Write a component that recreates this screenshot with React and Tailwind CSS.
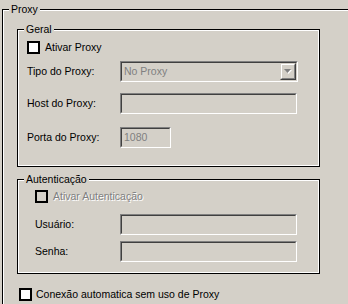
import React from "react";

const font = { fontFamily: '"Liberation Sans", Arial, sans-serif' };

function CheckBox({ disabled }) {
  return (
    <span
      className={`block w-[13px] h-[13px] border-2 border-black shrink-0 ${disabled ? "bg-[#d4d0c8]" : "bg-white"}`}
    />
  );
}

function Sunken({ width, children }) {
  return (
    <div className="h-[21px] border border-t-[#808080] border-l-[#808080] border-b-white border-r-white" style={{ width }}>
      <div className="h-full border border-t-[#404040] border-l-[#404040] border-b-[#d4d0c8] border-r-[#d4d0c8] bg-[#d4d0c8] flex items-center pl-[2px] text-[#808080]">
        {children}
      </div>
    </div>
  );
}

function Group({ title, className, children }) {
  return (
    <div className={`relative border border-black ${className}`}>
      <span className="absolute left-[6px] -top-[7px] bg-[#d4d0c8] px-[2px] leading-[13px]">{title}</span>
      <div className="h-full border border-white">{children}</div>
    </div>
  );
}

function Row({ label, top, labelWidth = 85, children }) {
  return (
    <div className="flex items-center" style={{ marginTop: top }}>
      <span className="shrink-0" style={{ width: labelWidth }}>{label}</span>
      {children}
    </div>
  );
}

export default function App() {
  return (
    <div className="w-[348px] h-[304px] overflow-hidden bg-[#d4d0c8] text-[10.5px] leading-[13px] text-black pl-[2px] pt-[9px]" style={font}>
      <div className="relative w-[400px] h-[400px] border-l border-t border-black">
        <span className="absolute left-[6px] -top-[7px] bg-[#d4d0c8] px-[2px] leading-[13px]">Proxy</span>
        <div className="h-full border-l border-t border-white pl-[13px] pt-[18px]">
          <Group title="Geral" className="w-[303px] h-[138px]">
            <div className="pl-[8px] pt-[10px]">
              <div className="flex items-center gap-[5px]">
                <CheckBox />
                <span>Ativar Proxy</span>
              </div>
              <Row label="Tipo do Proxy:" top={7} labelWidth={93}>
                <div className="relative">
                  <Sunken width={178}>No Proxy</Sunken>
                  <div className="absolute right-[2px] top-[2px] w-[16px] h-[17px] border border-t-[#d4d0c8] border-l-[#d4d0c8] border-b-[#404040] border-r-[#404040]">
                    <div className="h-full border border-t-white border-l-white border-b-[#808080] border-r-[#808080] flex items-center justify-center">
                      <svg width="8" height="5" viewBox="0 0 8 5">
                        <path d="M1 1h7l-3.5 4z" fill="#fff" />
                        <path d="M0 0h7l-3.5 4z" fill="#808080" />
                      </svg>
                    </div>
                  </div>
                </div>
              </Row>
              <Row label="Host do Proxy:" top={11} labelWidth={93}>
                <Sunken width={177} />
              </Row>
              <Row label="Porta do Proxy:" top={13} labelWidth={93}>
                <Sunken width={51}>1080</Sunken>
              </Row>
            </div>
          </Group>
          <Group title="Autenticação" className="w-[303px] h-[95px] mt-[12px]">
            <div className="pl-[16px] pt-[9px]">
              <div className="flex items-center gap-[5px]">
                <CheckBox disabled />
                <span className="text-[#808080] [text-shadow:1px_1px_0_#fff]">Ativar Autenticação</span>
              </div>
              <Row label="Usuário:" top={11}>
                <Sunken width={177} />
              </Row>
              <Row label="Senha:" top={6}>
                <Sunken width={177} />
              </Row>
            </div>
          </Group>
          <div className="flex items-center gap-[4px] ml-[2px] mt-[14px]">
            <CheckBox />
            <span>Conexão automatica sem uso de Proxy</span>
          </div>
        </div>
      </div>
    </div>
  );
}
